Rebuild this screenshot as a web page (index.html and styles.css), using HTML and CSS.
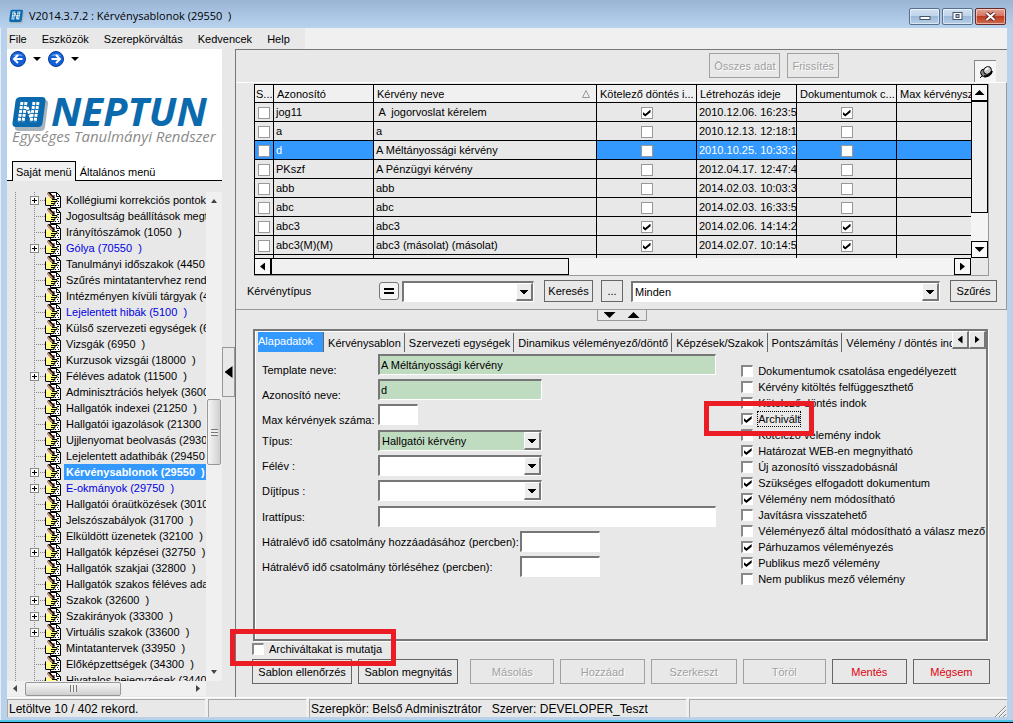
FILE: index.html
```html
<!DOCTYPE html>
<html lang="hu">
<head>
  <meta charset="UTF-8" />
  <meta name="viewport" content="width=device-width, initial-scale=1.0" />
  <title>V2014.3.7.2 : Kérvénysablonok (29550)</title>
  <link rel="stylesheet" href="styles.css">
</head>
<body>
  <svg class="defs" width="0" height="0" aria-hidden="true">
    <symbol id="icon-doc" viewBox="0 0 16 16">
      <path d="M5.500.5h6l4 4v11h-10z" fill="#fff" stroke="#000"/>
      <path d="M11.500.5v4h4" fill="none" stroke="#000"/>
      <path d="M12 6.500h2M13 9.500h1M12 11.500h1M10 13.500h1M13 13.500h1" stroke="#000"/>
      <path d="M1 6h3l2-1h3v2h3v2h-2v2h-1v2H4l-1-1H1z" fill="#ffff80"/>
      <path d="M.5 5.500v8M1 13.500h2M3 13.500h6v-2h1v-2h2v-2H7M6 9.500h4M6 11.500h3" fill="none" stroke="#000"/>
      <path d="M3 .5l5.500 6" stroke="#000" stroke-width="3"/>
      <path d="M2.500 1l5 5.500" stroke="#e8955a" stroke-width="1.500"/>
      <path d="M9 3v4" stroke="#000"/>
    </symbol>
    <symbol id="icon-neptun" viewBox="0 0 36 34">
      <path d="M9 2h22q4 0 3.500 4l-3 23q-.5 4-4.500 4H5q-4 0-3.500-4l3-23q.5-4 4.500-4z" fill="#a9b4bd" transform="translate(1.500 1)"/>
      <path d="M9 0h21q4 0 3.500 4l-3 22q-.5 4-4.500 4H4q-4 0-3.500-4l3-22Q4 0 9 0z" fill="#0a6aad"/>
      <g stroke="#fff" stroke-width="3" stroke-dasharray="3 1" fill="none">
        <path d="M10 5l-3 20M14 5l-3 20M26 5l-3 20M22 5l-3 20"/>
        <path d="M15 10l5 13"/>
      </g>
    </symbol>
  </svg>

  <div class="window">
    <header class="titlebar">
      <svg class="app-icon" viewBox="0 0 36 34"><use href="#icon-neptun"/></svg>
      <h1>V2014.3.7.2 : Kérvénysablonok (29550  )</h1>
      <div class="window-buttons">
        <button type="button" aria-label="Kis méret"><svg viewBox="0 0 28 15"><rect x="9.500" y="7.500" width="10" height="3" fill="#fff" stroke="#44556a"/></svg></button>
        <button type="button" aria-label="Teljes méret"><svg viewBox="0 0 28 15"><rect x="9.500" y="3.500" width="9" height="7" fill="#fff" stroke="#44556a"/><rect x="12.500" y="5.500" width="3" height="3" fill="#a9c0dc" stroke="#44556a"/></svg></button>
        <button type="button" class="close" aria-label="Bezárás"><svg viewBox="0 0 28 15"><path d="M10 4l8 7M18 4l-8 7" stroke="#5a2a2a" stroke-width="4"/><path d="M10 4l8 7M18 4l-8 7" stroke="#fff" stroke-width="2"/></svg></button>
      </div>
    </header>

    <nav class="menubar">
      <div class="menu-items">
        <a href="#">File</a>
        <a href="#">Eszközök</a>
        <a href="#">Szerepkörváltás</a>
        <a href="#">Kedvencek</a>
        <a href="#">Help</a>
      </div>
    </nav>

    <div class="content">
      <aside class="sidebar">
        <div class="history">
          <button type="button" aria-label="Vissza"><svg viewBox="0 0 16 16"><circle cx="8" cy="8" r="7.500" fill="#1560d4" stroke="#0a3c9c"/><path d="M3 5a6 5 0 0 1 10 0" fill="#5b9bf0"/><path d="M12.500 8H4.500M8 4L4 8l4 4" stroke="#fff" stroke-width="2" fill="none"/></svg></button>
          <button type="button" class="drop" aria-label="Előzmények vissza"></button>
          <button type="button" aria-label="Előre"><svg viewBox="0 0 16 16"><circle cx="8" cy="8" r="7.500" fill="#1560d4" stroke="#0a3c9c"/><path d="M3 5a6 5 0 0 1 10 0" fill="#5b9bf0"/><path d="M3.500 8h8M8 4l4 4-4 4" stroke="#fff" stroke-width="2" fill="none"/></svg></button>
          <button type="button" class="drop" aria-label="Előzmények előre"></button>
        </div>
        <div class="logo">
          <div class="logo-top">
            <svg viewBox="0 0 36 34"><use href="#icon-neptun"/></svg>
            <span class="wordmark">NEPTUN</span>
          </div>
          <p>Egységes Tanulmányi Rendszer</p>
        </div>
        <div class="side-tabs">
          <button type="button" class="active">Saját menü</button>
          <button type="button">Általános menü</button>
        </div>
        <div class="tree-area">
          <ul class="tree">
            <li class="parent"><svg><use href="#icon-doc"/></svg><a href="#">Kollégiumi korrekciós pontok</a></li>
            <li><svg><use href="#icon-doc"/></svg><a href="#">Jogosultság beállítások megtekintése</a></li>
            <li><svg><use href="#icon-doc"/></svg><a href="#">Irányítószámok (1050  )</a></li>
            <li class="parent"><svg><use href="#icon-doc"/></svg><a href="#" class="blue">Gólya (70550  )</a></li>
            <li><svg><use href="#icon-doc"/></svg><a href="#">Tanulmányi időszakok (4450  )</a></li>
            <li><svg><use href="#icon-doc"/></svg><a href="#">Szűrés mintatantervhez rendelt</a></li>
            <li><svg><use href="#icon-doc"/></svg><a href="#">Intézményen kívüli tárgyak (4500  )</a></li>
            <li><svg><use href="#icon-doc"/></svg><a href="#" class="blue">Lejelentett hibák (5100  )</a></li>
            <li><svg><use href="#icon-doc"/></svg><a href="#">Külső szervezeti egységek (6850  )</a></li>
            <li><svg><use href="#icon-doc"/></svg><a href="#">Vizsgák (6950  )</a></li>
            <li><svg><use href="#icon-doc"/></svg><a href="#">Kurzusok vizsgái (18000  )</a></li>
            <li class="parent"><svg><use href="#icon-doc"/></svg><a href="#">Féléves adatok (11500  )</a></li>
            <li><svg><use href="#icon-doc"/></svg><a href="#">Adminisztrációs helyek (3600  )</a></li>
            <li><svg><use href="#icon-doc"/></svg><a href="#">Hallgatók indexei (21250  )</a></li>
            <li><svg><use href="#icon-doc"/></svg><a href="#">Hallgatói igazolások (21300  )</a></li>
            <li><svg><use href="#icon-doc"/></svg><a href="#">Ujjlenyomat beolvasás (29300  )</a></li>
            <li><svg><use href="#icon-doc"/></svg><a href="#">Lejelentett adathibák (29450  )</a></li>
            <li class="parent"><svg><use href="#icon-doc"/></svg><a href="#" class="current">Kérvénysablonok (29550  )</a></li>
            <li class="parent"><svg><use href="#icon-doc"/></svg><a href="#" class="blue">E-okmányok (29750  )</a></li>
            <li><svg><use href="#icon-doc"/></svg><a href="#">Hallgatói óraütközések (30100  )</a></li>
            <li><svg><use href="#icon-doc"/></svg><a href="#">Jelszószabályok (31700  )</a></li>
            <li><svg><use href="#icon-doc"/></svg><a href="#">Elküldött üzenetek (32100  )</a></li>
            <li class="parent"><svg><use href="#icon-doc"/></svg><a href="#">Hallgatók képzései (32750  )</a></li>
            <li><svg><use href="#icon-doc"/></svg><a href="#">Hallgatók szakjai (32800  )</a></li>
            <li><svg><use href="#icon-doc"/></svg><a href="#">Hallgatók szakos féléves adatai</a></li>
            <li class="parent"><svg><use href="#icon-doc"/></svg><a href="#">Szakok (32600  )</a></li>
            <li class="parent"><svg><use href="#icon-doc"/></svg><a href="#">Szakirányok (33300  )</a></li>
            <li class="parent"><svg><use href="#icon-doc"/></svg><a href="#">Virtuális szakok (33600  )</a></li>
            <li><svg><use href="#icon-doc"/></svg><a href="#">Mintatantervek (33950  )</a></li>
            <li><svg><use href="#icon-doc"/></svg><a href="#">Előképzettségek (34300  )</a></li>
            <li><svg><use href="#icon-doc"/></svg><a href="#">Hivatalos bejegyzések (34400  )</a></li>
          </ul>
          <div class="tree-vscroll">
            <i class="arrow up small"></i>
            <span class="thumb"></span>
            <i class="arrow down small"></i>
          </div>
          <div class="tree-hscroll">
            <i class="arrow left small"></i>
            <span class="thumb"></span>
            <i class="arrow right small"></i>
          </div>
        </div>
      </aside>

      <div class="splitter"><button type="button" aria-label="Menü elrejtése"><i class="arrow left big"></i></button></div>

      <main class="main">
        <div class="toolbar">
          <button type="button" class="btn" disabled>Összes adat</button>
          <button type="button" class="btn" disabled>Frissítés</button>
          <button type="button" class="pin" aria-label="Rögzítés">
            <svg viewBox="0 0 14 14"><path d="M1 13l4-4" stroke="#000"/><ellipse cx="5.500" cy="8" rx="3.500" ry="4" fill="#888" stroke="#000" transform="rotate(-40 5.500 8)"/><ellipse cx="8.500" cy="5.500" rx="4" ry="3.500" fill="#ccc" stroke="#000" transform="rotate(-40 8.500 5.500)"/><path d="M6 5l3-2" stroke="#fff" stroke-width="2"/><path d="M5 11c3 1 7-1 8-5" stroke="#000" stroke-width="2" fill="none"/></svg>
          </button>
        </div>

        <section class="list-panel">
          <div class="grid-box">
            <div class="grid-view">
              <table>
                <colgroup>
                  <col class="c-sel"><col class="c-mid"><col class="c-name"><col class="c-mid"><col class="c-mid"><col class="c-mid"><col class="c-mid">
                </colgroup>
                <thead>
                  <tr>
                    <th>S...</th>
                    <th>Azonosító</th>
                    <th><span class="sorted">Kérvény neve <svg viewBox="0 0 8 8"><path d="M4 .5l3.500 7h-7z" fill="none" stroke="#999"/></svg></span></th>
                    <th>Kötelező döntés i...</th>
                    <th>Létrehozás ideje</th>
                    <th>Dokumentumok c...</th>
                    <th>Max kérvényszám</th>
                  </tr>
                </thead>
                <tbody>
                  <tr>
                    <td class="check"><input type="checkbox" aria-label="jog11 kijelölése"></td><td>jog11</td><td> A  jogorvoslat kérelem</td>
                    <td class="check"><input type="checkbox" aria-label="Kötelező döntés" checked></td><td>2010.12.06. 16:23:5</td>
                    <td class="check"><input type="checkbox" aria-label="Dokumentumok" checked></td><td></td>
                  </tr>
                  <tr>
                    <td class="check"><input type="checkbox" aria-label="a kijelölése"></td><td>a</td><td>a</td>
                    <td class="check"><input type="checkbox" aria-label="Kötelező döntés"></td><td>2010.12.13. 12:18:1</td>
                    <td class="check"><input type="checkbox" aria-label="Dokumentumok"></td><td></td>
                  </tr>
                  <tr class="selected">
                    <td class="check"><input type="checkbox" aria-label="d kijelölése"></td><td>d</td><td class="focus">A Méltányossági kérvény</td>
                    <td class="check"><input type="checkbox" aria-label="Kötelező döntés"></td><td>2010.10.25. 10:33:3</td>
                    <td class="check"><input type="checkbox" aria-label="Dokumentumok"></td><td></td>
                  </tr>
                  <tr>
                    <td class="check"><input type="checkbox" aria-label="PKszf kijelölése"></td><td>PKszf</td><td>A Pénzügyi kérvény</td>
                    <td class="check"><input type="checkbox" aria-label="Kötelező döntés"></td><td>2012.04.17. 12:47:4</td>
                    <td class="check"><input type="checkbox" aria-label="Dokumentumok"></td><td></td>
                  </tr>
                  <tr>
                    <td class="check"><input type="checkbox" aria-label="abb kijelölése"></td><td>abb</td><td>abb</td>
                    <td class="check"><input type="checkbox" aria-label="Kötelező döntés"></td><td>2014.02.03. 10:03:3</td>
                    <td class="check"><input type="checkbox" aria-label="Dokumentumok"></td><td></td>
                  </tr>
                  <tr>
                    <td class="check"><input type="checkbox" aria-label="abc kijelölése"></td><td>abc</td><td>abc</td>
                    <td class="check"><input type="checkbox" aria-label="Kötelező döntés"></td><td>2014.02.03. 16:33:5</td>
                    <td class="check"><input type="checkbox" aria-label="Dokumentumok"></td><td></td>
                  </tr>
                  <tr>
                    <td class="check"><input type="checkbox" aria-label="abc3 kijelölése"></td><td>abc3</td><td>abc3</td>
                    <td class="check"><input type="checkbox" aria-label="Kötelező döntés" checked></td><td>2014.02.06. 14:14:2</td>
                    <td class="check"><input type="checkbox" aria-label="Dokumentumok" checked></td><td></td>
                  </tr>
                  <tr>
                    <td class="check"><input type="checkbox" aria-label="abc3(M)(M) kijelölése"></td><td>abc3(M)(M)</td><td>abc3 (másolat) (másolat)</td>
                    <td class="check"><input type="checkbox" aria-label="Kötelező döntés" checked></td><td>2014.02.07. 10:14:5</td>
                    <td class="check"><input type="checkbox" aria-label="Dokumentumok" checked></td><td></td>
                  </tr>
                  <tr><td></td><td></td><td></td><td></td><td></td><td></td><td></td></tr>
                </tbody>
              </table>
            </div>
            <div class="grid-vscroll">
              <span class="sb-btn"><i class="arrow up"></i></span>
              <span class="sb-thumb"></span>
              <span class="sb-btn end"><i class="arrow down"></i></span>
            </div>
            <div class="grid-hscroll">
              <span class="sb-btn"><i class="arrow left"></i></span>
              <span class="sb-thumb"></span>
              <span class="sb-btn end"><i class="arrow right"></i></span>
            </div>
          </div>

          <div class="filter">
            <label for="reqType">Kérvénytípus</label>
            <button type="button" class="equals" aria-label="Egyenlő"></button>
            <span class="select type"><select id="reqType"><option></option></select></span>
            <button type="button" class="btn search">Keresés</button>
            <button type="button" class="btn more">...</button>
            <span class="select all"><select aria-label="Szűrő"><option>Minden</option></select></span>
            <button type="button" class="btn apply">Szűrés</button>
          </div>
        </section>

        <div class="grip"><i class="arrow down big"></i><i class="arrow up big"></i></div>

        <section class="details">
          <div class="tabs">
            <div class="tab-strip">
              <button type="button" class="active">Alapadatok</button>
              <button type="button">Kérvénysablon</button>
              <button type="button">Szervezeti egységek</button>
              <button type="button">Dinamikus véleményező/döntő</button>
              <button type="button">Képzések/Szakok</button>
              <button type="button">Pontszámítás</button>
              <button type="button">Vélemény / döntés indokok</button>
            </div>
            <button type="button" class="tab-scroll" aria-label="Előző fül"><i class="arrow left"></i></button>
            <button type="button" class="tab-scroll" aria-label="Következő fül"><i class="arrow right"></i></button>
          </div>

          <form class="form">
            <div class="fields">
              <div class="group low">
                <div class="row"><label for="tplName">Template neve:</label><input type="text" id="tplName" class="wide green" value="A Méltányossági kérvény"></div>
                <div class="row"><label for="idName">Azonosító neve:</label><input type="text" id="idName" class="mid green" value="d"></div>
                <div class="row"><label for="maxReq">Max kérvények száma:</label><input type="text" id="maxReq" class="tiny"></div>
              </div>
              <div class="group">
                <div class="row"><label for="kind">Típus:</label><span class="select mid green"><select id="kind"><option>Hallgatói kérvény</option></select></span></div>
                <div class="row"><label for="term">Félév :</label><span class="select mid"><select id="term"><option></option></select></span></div>
                <div class="row"><label for="fee">Díjtípus :</label><span class="select mid"><select id="fee"><option></option></select></span></div>
              </div>
              <div class="group">
                <div class="row"><label for="docType">Irattípus:</label><input type="text" id="docType" class="wide"></div>
                <div class="row long"><label for="addTime">Hátralévő idő csatolmány hozzáadásához (percben):</label><input type="text" id="addTime" class="short"></div>
                <div class="row long"><label for="delTime">Hátralévő idő csatolmány törléséhez (percben):</label><input type="text" id="delTime" class="short"></div>
              </div>
            </div>
            <div class="options">
              <label><input type="checkbox"> Dokumentumok csatolása engedélyezett</label>
              <label><input type="checkbox"> Kérvény kitöltés felfüggeszthető</label>
              <label><input type="checkbox"> Kötelező döntés indok</label>
              <label class="marked"><input type="checkbox" checked> <span class="focused">Archivált</span></label>
              <label><input type="checkbox"> Kötelező vélemény indok</label>
              <label><input type="checkbox" checked> Határozat WEB-en megnyitható</label>
              <label><input type="checkbox"> Új azonosító visszadobásnál</label>
              <label><input type="checkbox" checked> Szükséges elfogadott dokumentum</label>
              <label><input type="checkbox" checked> Vélemény nem módosítható</label>
              <label><input type="checkbox"> Javításra visszatehető</label>
              <label><input type="checkbox"> Véleményező által módosítható a válasz mező</label>
              <label><input type="checkbox" checked> Párhuzamos véleményezés</label>
              <label><input type="checkbox" checked> Publikus mező vélemény</label>
              <label><input type="checkbox"> Nem publikus mező vélemény</label>
            </div>
          </form>
        </section>

        <div class="archived">
          <label class="marked"><input type="checkbox"> Archiváltakat is mutatja</label>
        </div>

        <div class="actions">
          <button type="button" class="btn">Sablon ellenőrzés</button>
          <button type="button" class="btn">Sablon megnyitás</button>
          <span></span>
          <button type="button" class="btn" disabled>Másolás</button>
          <button type="button" class="btn" disabled>Hozzáad</button>
          <button type="button" class="btn" disabled>Szerkeszt</button>
          <button type="button" class="btn" disabled>Töröl</button>
          <button type="button" class="btn red">Mentés</button>
          <button type="button" class="btn red">Mégsem</button>
        </div>
      </main>
    </div>

    <footer class="statusbar">
      <span>Letöltve 10 / 402 rekord.</span>
      <span></span>
      <span>Szerepkör: Belső Adminisztrátor   Szerver: DEVELOPER_Teszt</span>
      <span class="last"><svg viewBox="0 0 12 12"><path d="M1 12L12 1M5 12l7-7M9 12l3-3" stroke="#888"/><path d="M2 12L12 2M6 12l6-6" stroke="#fff"/></svg></span>
    </footer>
  </div>
</body>
</html>
```
FILE: styles.css
```css
*,
*::before,
*::after {
  box-sizing: border-box;
}

body {
  margin: 0;
  font-family: "Liberation Sans", Arial, sans-serif;
  font-size: 11px;
  line-height: 14px;
  color: #000;
  background: #b9d1ea;
}

button,
input,
select {
  font: inherit;
  color: inherit;
  margin: 0;
  padding: 0;
  border: 0;
  border-radius: 0;
  background: none;
}

a {
  color: inherit;
  text-decoration: none;
}

.defs {
  position: absolute;
}

.window {
  display: flex;
  flex-direction: column;
  height: 100vh;
  padding: 0 6px 5px 7px;
  border-bottom: 1px solid #000;
  background: #b9d1ea;
  box-shadow: inset 0 -2px 0 #4fc3e8, inset 1px 0 0 #e4eef8;
}

/* title and menu */
.titlebar {
  display: flex;
  align-items: center;
  gap: 5px;
  height: 28px;
  flex: none;
  margin: 0 -6px 0 -7px;
  padding: 4px 7px 0 9px;
  background: linear-gradient(#9ab5d3, #a9c4e2 50%, #b9d3ee);
}

.titlebar h1 {
  flex: 1;
  margin: 0;
  font-family: "Open Sans", sans-serif;
  font-size: 11px;
  font-weight: normal;
  white-space: pre;
}

.app-icon {
  width: 15px;
  height: 15px;
}

.window-buttons {
  display: flex;
  gap: 2px;
}

.window-buttons button {
  width: 31px;
  height: 17px;
  border: 1px solid #56708f;
  border-radius: 2px;
  background: linear-gradient(#d3e2f2, #bdd2e9 50%, #9db9d8 50%, #b7cfe8);
  box-shadow: inset 0 0 0 1px rgba(255, 255, 255, 0.5);
}

.window-buttons .close {
  border-color: #6b2a2a;
  background: linear-gradient(#e3a495, #d5705c 50%, #bd3b20 50%, #d06a4c);
}

.window-buttons svg {
  display: block;
  height: 15px;
  width: 29px;
}

.menubar {
  flex: none;
  height: 21px;
  background: #f0f0f0;
}

.menu-items {
  display: flex;
  gap: 15px;
  width: 298px;
  height: 21px;
  padding: 0 2px;
  align-items: center;
  background: #e8e8e8;
}

.content {
  display: flex;
  flex: 1;
  min-height: 0;
  background: #e8e8e8;
}

/* arrows */
.arrow {
  display: block;
  width: 8px;
  height: 4px;
  background: #000;
}

.arrow.up { clip-path: polygon(50% 0, 100% 100%, 0 100%); }
.arrow.down { clip-path: polygon(0 0, 100% 0, 50% 100%); }
.arrow.left { width: 5px; height: 8px; clip-path: polygon(100% 0, 100% 100%, 0 50%); }
.arrow.right { width: 5px; height: 8px; clip-path: polygon(0 0, 100% 50%, 0 100%); }
.arrow.small { width: 6px; height: 4px; background: #444; }
.arrow.small.left,
.arrow.small.right { width: 4px; height: 7px; }
.arrow.big { width: 12px; height: 6px; }
.arrow.big.left { width: 8px; height: 12px; }

.sb-btn .up,
.sb-btn .down { width: 10px; height: 5px; }

/* left side */
.sidebar {
  display: flex;
  flex-direction: column;
  width: 215px;
  flex: none;
}

.history {
  display: flex;
  align-items: center;
  height: 20px;
  padding-left: 3px;
  background: #fff;
}

.history button {
  width: 16px;
  height: 16px;
}

.history svg {
  display: block;
  width: 16px;
  height: 16px;
}

.history .drop {
  width: 8px;
  height: 4px;
  margin: 0 7px;
  background: #000;
  clip-path: polygon(0 0, 100% 0, 50% 100%);
}

.logo {
  height: 92px;
  padding: 28px 5px 0;
  background: #fff;
}

.logo-top {
  display: flex;
  gap: 3px;
  height: 31px;
}

.logo-top svg {
  flex: none;
  width: 36px;
  height: 34px;
}

.wordmark {
  font-family: "Noto Sans", sans-serif;
  font-size: 40px;
  line-height: 28px;
  font-weight: bold;
  font-style: italic;
  color: #0a6aad;
}

.logo p {
  margin: 0;
  font-family: "Open Sans", sans-serif;
  font-size: 15px;
  line-height: 17px;
  font-style: italic;
  white-space: nowrap;
  color: #8b8b8b;
}

.side-tabs {
  display: flex;
  height: 20px;
  padding-left: 5px;
  background: #fff;
  border-bottom: 1px solid #000;
}

.side-tabs button {
  height: 19px;
  padding: 2px 4px 0;
  white-space: nowrap;
}

.side-tabs .active {
  height: 20px;
  padding: 1px 3px 0;
  border: 1px solid #000;
  border-bottom: 0;
  background: #f0f0f0;
}

.tree-area {
  display: grid;
  grid-template: minmax(0, 1fr) 15px / minmax(0, 1fr) 16px;
  flex: 1;
  min-height: 0;
  padding-top: 11px;
  margin-bottom: 1px;
}

.tree {
  margin: 0;
  padding: 0 0 0 27px;
  list-style: none;
  overflow: hidden;
  background:
    repeating-linear-gradient(#888 0 1px, #e8e8e8 1px 2px) 8px 0 / 1px 100% no-repeat,
    repeating-linear-gradient(#888 0 1px, #e8e8e8 1px 2px) 27px 0 / 1px 100% no-repeat;
}

.tree li {
  display: flex;
  align-items: center;
  height: 16px;
  padding-left: 11px;
  background: repeating-linear-gradient(90deg, #888 0 1px, #e8e8e8 1px 2px) 0 8px / 11px 1px no-repeat;
  white-space: pre;
}

.tree .parent::before {
  content: "";
  flex: none;
  width: 9px;
  height: 9px;
  margin: 0 6px 0 -15px;
  border: 1px solid #888;
  background:
    linear-gradient(#000, #000) 50% / 5px 1px no-repeat,
    linear-gradient(#000, #000) 50% / 1px 5px no-repeat,
    #fff;
}

.tree svg {
  flex: none;
  width: 16px;
  height: 16px;
  margin-right: 3px;
}

.tree a {
  padding: 1px 2px;
}

.tree .blue {
  color: #0000e0;
}

.tree .current {
  font-weight: bold;
  color: #fff;
  background: #3399ff;
}

.tree-vscroll {
  display: flex;
  flex-direction: column;
  align-items: center;
  padding: 7px 1px;
  background: #f0f0f0;
}

.tree-vscroll .thumb,
.tree-hscroll .thumb {
  border: 1px solid #979797;
  border-radius: 2px;
}

.tree-vscroll .thumb {
  width: 14px;
  height: 66px;
  margin: 196px 0 auto;
  background:
    repeating-linear-gradient(#777 0 1px, #eee 1px 3px) 50% 50% / 7px 7px no-repeat,
    linear-gradient(90deg, #f5f5f5, #e3e3e3 50%, #cfcfcf);
}

.tree-hscroll {
  display: flex;
  align-items: center;
  padding: 0 6px;
  background: #f0f0f0;
}

.tree-hscroll .thumb {
  width: 96px;
  height: 14px;
  margin: 0 auto 0 8px;
  background:
    repeating-linear-gradient(90deg, #777 0 1px, #eee 1px 3px) 50% 50% / 7px 7px no-repeat,
    linear-gradient(#f5f5f5, #e3e3e3 50%, #cfcfcf);
}

.splitter {
  width: 13px;
  flex: none;
  padding-top: 298px;
}

.splitter button {
  display: flex;
  align-items: center;
  justify-content: center;
  width: 13px;
  height: 50px;
  border: 1px solid #999;
}

/* main panel */
.main {
  display: flex;
  flex-direction: column;
  flex: 1;
  min-width: 0;
  border-top: 1px solid #777;
  border-left: 1px solid #777;
}

.btn {
  height: 22px;
  border: 1px solid #666;
  text-align: center;
  white-space: nowrap;
}

.btn:disabled {
  border-color: #a0a0a0;
  color: #a0a0a0;
  text-shadow: 1px 1px 0 #fff;
}

.btn.red {
  color: #e00010;
}

.toolbar {
  display: flex;
  justify-content: flex-end;
  gap: 7px;
  height: 32px;
  padding: 3px 11px 0 0;
}

.toolbar .btn {
  height: 25px;
  padding: 0 4px;
}

.toolbar .btn + .pin {
  margin: 7px 0 0 128px;
}

.pin {
  display: flex;
  align-items: center;
  justify-content: center;
  width: 22px;
  height: 23px;
  border: 1px solid #888;
  border-width: 1px 0 0 1px;
  background: #f6f6f6;
}

.pin svg {
  width: 14px;
  height: 14px;
}

.list-panel {
  border: solid #fff;
  border-width: 1px 0;
  border-right: 1px solid #999;
  border-bottom: 1px solid #999;
}

.grid-box {
  display: grid;
  grid-template: 174px 17px / minmax(0, 1fr) 17px;
  margin: 1px 17px 0 18px;
  border: solid #999;
  border-width: 0 1px 1px 0;
}

.grid-view {
  overflow: hidden;
  border: solid #000;
  border-width: 1px 0 0 1px;
}

.grid-view table {
  width: 742px;
  table-layout: fixed;
  border-spacing: 0;
}

.c-sel { width: 19px; }
.c-mid { width: 100px; }
.c-name { width: 223px; }

.grid-view th,
.grid-view td {
  height: 19px;
  padding: 0 0 0 2px;
  border: solid #000;
  border-width: 0 1px 1px 0;
  font-weight: normal;
  text-align: left;
  white-space: pre;
  overflow: hidden;
}

.grid-view th {
  height: 18px;
  padding-left: 3px;
  background: #f0f0f0;
}

.grid-view th:first-child {
  padding-left: 1px;
}

.sorted {
  display: flex;
  align-items: center;
  justify-content: space-between;
  padding-right: 6px;
}

.sorted svg {
  width: 8px;
  height: 8px;
}

.grid-view .check {
  padding: 0;
  text-align: center;
}

.selected td {
  color: #fff;
  background: #3399ff;
}

.selected .focus {
  color: #000;
  background: #e8e8e8;
}

input[type="checkbox"] {
  appearance: none;
  display: inline-flex;
  align-items: center;
  justify-content: center;
  flex: none;
  width: 12px;
  height: 12px;
  border: 1px solid #999;
  background: #fff;
  vertical-align: middle;
}

input[type="checkbox"]:checked::before {
  content: "";
  width: 8px;
  height: 7px;
  background: #000;
  clip-path: polygon(0 30%, 35% 62%, 100% 0, 100% 38%, 35% 100%, 0 68%);
}

.grid-vscroll {
  display: flex;
  flex-direction: column;
  background: #f4f4f4;
}

.grid-hscroll {
  display: flex;
  background: #f4f4f4;
}

.sb-btn {
  display: flex;
  align-items: center;
  justify-content: center;
  width: 17px;
  height: 17px;
  border: 1px solid #000;
  background: #f8f8f8;
}

.sb-thumb {
  border: 1px solid #000;
  background: #f0f0f0;
}

.grid-vscroll .sb-thumb { height: 112px; }
.grid-vscroll .end { margin-top: auto; }
.grid-hscroll .sb-thumb { width: 298px; }
.grid-hscroll .end { margin-left: auto; }

/* sunken text boxes and drop-downs */
input[type="text"],
.select {
  height: 21px;
  border: solid;
  border-width: 2px 1px 1px 2px;
  border-color: #777 #fff #fff #777;
  background: #fff;
}

input[type="text"] {
  padding: 0 1px;
}

.select {
  position: relative;
  display: flex;
}

.select select {
  appearance: none;
  flex: 1;
  min-width: 0;
  padding: 0 18px 0 2px;
}

.select::after {
  content: "";
  position: absolute;
  top: 0;
  right: 0;
  width: 17px;
  height: 18px;
  border: solid;
  border-width: 1px 2px 2px 1px;
  border-color: #fff #777 #777 #fff;
  background: linear-gradient(#000, #000) 3px 6px / 8px 1px no-repeat,
    linear-gradient(#000, #000) 4px 7px / 6px 1px no-repeat,
    linear-gradient(#000, #000) 5px 8px / 4px 1px no-repeat,
    linear-gradient(#000, #000) 6px 9px / 2px 1px no-repeat,
    #ececec;
  pointer-events: none;
}

.green {
  background: #c0dcc0 !important;
}

.filter {
  display: flex;
  align-items: center;
  padding: 4px 9px 7px 11px;
}

.filter label {
  width: 132px;
}

.equals {
  width: 20px;
  height: 18px;
  margin-right: 3px;
  border: 1px solid #777;
  border-radius: 3px;
  background:
    linear-gradient(#000, #000) 50% 5px / 10px 2px no-repeat,
    linear-gradient(#000, #000) 50% 9px / 10px 2px no-repeat,
    #f4f4f4;
}

.filter .type { width: 132px; }
.filter .search { width: 49px; margin: 0 8px 0 10px; }
.filter .more { width: 22px; margin-right: 8px; }
.filter .all { flex: 1; }
.filter .apply { width: 47px; margin-left: 10px; }

.grip {
  display: flex;
  align-items: center;
  justify-content: center;
  gap: 12px;
  flex: none;
  width: 50px;
  height: 11px;
  margin: 0 auto 8px;
  border: 1px solid #999;
  border-top: 0;
}

/* details with tabs */
.details {
  flex: 1;
  min-height: 0;
  margin: 0 19px 0 17px;
  border: 2px solid #777;
  box-shadow: 1px 1px 0 #fff, inset 1px 1px 0 #fff;
}

.tabs {
  display: flex;
  align-items: flex-start;
  padding-left: 3px;
}

.tab-strip {
  display: flex;
  flex: 1;
  min-width: 0;
  height: 21px;
  overflow: hidden;
}

.tab-strip button {
  flex: none;
  height: 19px;
  margin-top: 2px;
  padding: 1px 3px 0 4px;
  border-right: 1px solid #666;
  white-space: nowrap;
}

.tab-strip button:last-child {
  border: 0;
}

.tab-strip .active {
  height: 20px;
  margin-top: 1px;
  padding: 0 10px 3px 0;
  color: #fff;
  background: #3399ff;
}

.tab-scroll {
  display: flex;
  align-items: center;
  justify-content: center;
  width: 17px;
  height: 18px;
  border: solid;
  border-width: 1px 2px 2px 1px;
  border-color: #fff #777 #777 #fff;
}

.form {
  display: flex;
  justify-content: space-between;
  padding: 2px 1px 0 7px;
}

.fields {
  display: flex;
  flex-direction: column;
  gap: 5px;
}

.group {
  display: flex;
  flex-direction: column;
  gap: 4px;
}

.row {
  display: flex;
  align-items: center;
}

.low .row {
  align-items: flex-end;
}

.low label {
  line-height: 10px;
}

.row label {
  width: 116px;
  white-space: nowrap;
}

.long label {
  width: 258px;
}

.wide { width: 338px; }
.mid { width: 164px; }
.tiny { width: 40px; }
.short { width: 80px; }

.options {
  display: flex;
  flex-direction: column;
  padding-top: 9px;
}

.options label,
.archived label {
  display: flex;
  align-items: center;
  gap: 5px;
  height: 16px;
  white-space: nowrap;
}

.options input[type="checkbox"],
.archived input[type="checkbox"] {
  border-width: 2px 1px 1px 2px;
  border-color: #888 #fff #fff #888;
}

.focused {
  outline: 1px dotted #000;
}

/* red frames drawn over the marked options */
.marked {
  position: relative;
}

.marked::after {
  content: "";
  position: absolute;
  border: 5px solid #ec1c24;
  z-index: 1;
  pointer-events: none;
}

.options .marked {
  align-self: flex-start;
}

.options .marked::after {
  inset: -10px -14px -9px -37px;
}

.archived {
  display: flex;
  flex: none;
  padding: 0 0 2px 16px;
}

.archived .marked::after {
  inset: -12px -14px -9px -22px;
}

.actions {
  display: grid;
  grid-template-columns: 100fr 100fr 0 84fr 84fr 86fr 83fr 75fr 77fr;
  gap: 6px;
  flex: none;
  padding: 0 17px 13px 16px;
}

.actions .btn {
  height: 25px;
}

/* status bar */
.statusbar {
  display: grid;
  grid-template-columns: 198fr 98fr 377fr 318fr;
  gap: 3px;
  flex: none;
  height: 20px;
  padding-top: 1px;
  font-size: 12px;
  background: #f0f0f0;
  border-top: 1px solid #fff;
}

.statusbar span {
  padding: 2px 1px 0;
  border: 1px solid #aaa;
  border-width: 1px 0 0 1px;
  white-space: pre;
  background: #e8e8e8;
}

.statusbar .last {
  display: flex;
  align-items: flex-end;
  justify-content: flex-end;
}

.statusbar svg {
  width: 12px;
  height: 12px;
}
```
